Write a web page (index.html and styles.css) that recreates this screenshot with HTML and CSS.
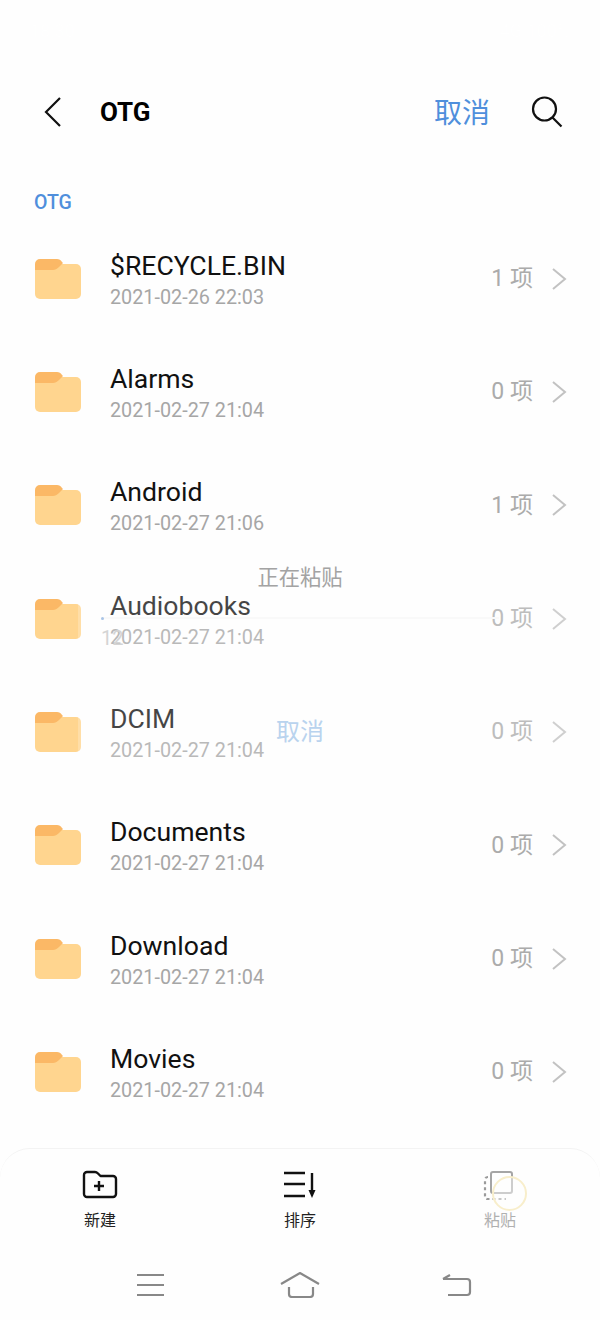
FILE: index.html
```html
<!DOCTYPE html>
<html lang="zh">
<head>
<meta charset="utf-8">
<title>OTG</title>
<link rel="stylesheet" href="styles.css">
</head>
<body>
<div class="page">
  <header class="status"><span>18:30</span><span>4G 100%</span></header>
  <div class="appbar">
    <svg class="back" width="20" height="32" viewBox="0 0 20 32"><path d="M17 2 3 16l14 14" /></svg>
    <h1 class="title">OTG</h1>
    <span class="cancel">取消</span>
    <svg class="search" width="32" height="32" viewBox="0 0 32 32"><circle cx="13.500" cy="13" r="11.500"/><path d="m21.500 21.500 9 9"/></svg>
  </div>
  <div class="section">OTG</div>
  <ul class="list">
    <li class="row">
      <svg class="folder" width="46" height="40" viewBox="0 0 46 40"><rect y="5" width="46" height="35" rx="5" fill="#ffd58f"/><path d="M0 12V5a5 5 0 0 1 5-5h17c2 0 4 1 5 3l1 1-4 4c-2 2-4 3-6 3H0z" fill="#fbb866"/></svg>
      <div class="info"><div class="name">$RECYCLE.BIN</div><div class="date">2021-02-26 22:03</div></div>
      <span class="count">1 项</span>
      <svg class="chev" width="16" height="24" viewBox="0 0 16 24"><path d="m2 2 12 10L2 22"/></svg>
    </li>
    <li class="row">
      <svg class="folder" width="46" height="40" viewBox="0 0 46 40"><rect y="5" width="46" height="35" rx="5" fill="#ffd58f"/><path d="M0 12V5a5 5 0 0 1 5-5h17c2 0 4 1 5 3l1 1-4 4c-2 2-4 3-6 3H0z" fill="#fbb866"/></svg>
      <div class="info"><div class="name">Alarms</div><div class="date">2021-02-27 21:04</div></div>
      <span class="count">0 项</span>
      <svg class="chev" width="16" height="24" viewBox="0 0 16 24"><path d="m2 2 12 10L2 22"/></svg>
    </li>
    <li class="row">
      <svg class="folder" width="46" height="40" viewBox="0 0 46 40"><rect y="5" width="46" height="35" rx="5" fill="#ffd58f"/><path d="M0 12V5a5 5 0 0 1 5-5h17c2 0 4 1 5 3l1 1-4 4c-2 2-4 3-6 3H0z" fill="#fbb866"/></svg>
      <div class="info"><div class="name">Android</div><div class="date">2021-02-27 21:06</div></div>
      <span class="count">1 项</span>
      <svg class="chev" width="16" height="24" viewBox="0 0 16 24"><path d="m2 2 12 10L2 22"/></svg>
    </li>
    <li class="row">
      <svg class="folder" width="46" height="40" viewBox="0 0 46 40"><rect y="5" width="46" height="35" rx="5" fill="#ffd58f"/><path d="M0 12V5a5 5 0 0 1 5-5h17c2 0 4 1 5 3l1 1-4 4c-2 2-4 3-6 3H0z" fill="#fbb866"/></svg>
      <div class="info"><div class="name">Audiobooks</div><div class="date">2021-02-27 21:04</div></div>
      <span class="count">0 项</span>
      <svg class="chev" width="16" height="24" viewBox="0 0 16 24"><path d="m2 2 12 10L2 22"/></svg>
    </li>
    <li class="row">
      <svg class="folder" width="46" height="40" viewBox="0 0 46 40"><rect y="5" width="46" height="35" rx="5" fill="#ffd58f"/><path d="M0 12V5a5 5 0 0 1 5-5h17c2 0 4 1 5 3l1 1-4 4c-2 2-4 3-6 3H0z" fill="#fbb866"/></svg>
      <div class="info"><div class="name">DCIM</div><div class="date">2021-02-27 21:04</div></div>
      <span class="count">0 项</span>
      <svg class="chev" width="16" height="24" viewBox="0 0 16 24"><path d="m2 2 12 10L2 22"/></svg>
    </li>
    <li class="row">
      <svg class="folder" width="46" height="40" viewBox="0 0 46 40"><rect y="5" width="46" height="35" rx="5" fill="#ffd58f"/><path d="M0 12V5a5 5 0 0 1 5-5h17c2 0 4 1 5 3l1 1-4 4c-2 2-4 3-6 3H0z" fill="#fbb866"/></svg>
      <div class="info"><div class="name">Documents</div><div class="date">2021-02-27 21:04</div></div>
      <span class="count">0 项</span>
      <svg class="chev" width="16" height="24" viewBox="0 0 16 24"><path d="m2 2 12 10L2 22"/></svg>
    </li>
    <li class="row">
      <svg class="folder" width="46" height="40" viewBox="0 0 46 40"><rect y="5" width="46" height="35" rx="5" fill="#ffd58f"/><path d="M0 12V5a5 5 0 0 1 5-5h17c2 0 4 1 5 3l1 1-4 4c-2 2-4 3-6 3H0z" fill="#fbb866"/></svg>
      <div class="info"><div class="name">Download</div><div class="date">2021-02-27 21:04</div></div>
      <span class="count">0 项</span>
      <svg class="chev" width="16" height="24" viewBox="0 0 16 24"><path d="m2 2 12 10L2 22"/></svg>
    </li>
    <li class="row">
      <svg class="folder" width="46" height="40" viewBox="0 0 46 40"><rect y="5" width="46" height="35" rx="5" fill="#ffd58f"/><path d="M0 12V5a5 5 0 0 1 5-5h17c2 0 4 1 5 3l1 1-4 4c-2 2-4 3-6 3H0z" fill="#fbb866"/></svg>
      <div class="info"><div class="name">Movies</div><div class="date">2021-02-27 21:04</div></div>
      <span class="count">0 项</span>
      <svg class="chev" width="16" height="24" viewBox="0 0 16 24"><path d="m2 2 12 10L2 22"/></svg>
    </li>
  </ul>
  <div class="toolbar">
    <div class="tool">
      <svg width="36" height="30" viewBox="0 0 36 30"><path class="ink" d="M2 5a3 3 0 0 1 3-3h8c1 0 2 .5 3 1.500L18.500 6H31a3 3 0 0 1 3 3v15a3 3 0 0 1-3 3H5a3 3 0 0 1-3-3z"/><path class="ink" d="M12 16h10M17 11v10"/></svg>
      <span>新建</span>
    </div>
    <div class="tool">
      <svg width="36" height="30" viewBox="0 0 36 30"><path class="ink" d="M2 3h21M2 14h21M2 26h21"/><path class="ink" d="M30 3v20"/><path d="m26.500 20 3.500 8 3.500-8z" fill="#111"/></svg>
      <span>排序</span>
    </div>
    <div class="tool tool-off">
      <svg width="36" height="30" viewBox="0 0 36 30"><rect class="solid" x="9" y="2" width="21" height="21" rx="2"/><path class="dots" d="M6 7c-2 0-3 1-3 3v16c0 2 1 3 3 3h18"/></svg>
      <span>粘贴</span>
    </div>
  </div>
  <nav class="navbar">
    <svg class="nav-menu" width="30" height="24" viewBox="0 0 30 24"><path class="nav" d="M1 2h27M1 12h27M1 22h27"/></svg>
    <svg class="nav-home" width="40" height="26" viewBox="0 0 40 26"><path class="nav" d="M1 12 20 1l19 11M9 15v7a3 3 0 0 0 3 3h18a3 3 0 0 0 3-3v-7"/></svg>
    <svg class="nav-back" width="30" height="24" viewBox="0 0 30 24"><path class="nav" d="M1 6h24a3 3 0 0 1 3 3v10a3 3 0 0 1-3 3H6M1 6l7-4"/></svg>
  </nav>
  <div class="dialog">
    <div class="dialog-title">正在粘贴</div>
    <div class="progress"><i class="progress-dot"></i></div>
    <div class="progress-num">12</div>
    <div class="dialog-cancel">取消</div>
  </div>
  <div class="touch"></div>
</div>
</body>
</html>
```
FILE: styles.css
```css
* { box-sizing: border-box; }
html, body { margin: 0; padding: 0; }
body { background: #fefefe; font-family: Roboto, "Noto Sans CJK SC", sans-serif; }
.page { position: relative; width: 600px; height: 1320px; overflow: hidden; display: flex; flex-direction: column; background: #fefefe; }

.status { height: 62px; padding: 20px 30px 0; display: flex; justify-content: space-between; color: #fff; font-size: 18px; }

.appbar { height: 100px; display: flex; align-items: center; padding: 0 37px 0 43px; }
.back { fill: none; stroke: #111; stroke-width: 2.200; margin-right: 37px; }
.title { margin: 0; flex: 1; font-size: 26px; font-weight: 700; color: #000; }
.cancel { font-size: 28px; line-height: 40px; margin-top: 3px; color: #4f8fdc; margin-right: 41px; }
.search { fill: none; stroke: #111; stroke-width: 2.200; }

.section { height: 60px; padding: 29px 0 0 34px; font-size: 19.500px; font-weight: 500; line-height: 24px; color: #4f8fdc; }

.list { list-style: none; margin: 0; padding: 0; }
.row { height: 113.330px; display: flex; align-items: center; padding: 0 33px 0 35px; }
.folder { flex: none; }
.info { flex: 1; margin-left: 29px; margin-top: 5px; }
.name { font-size: 26.600px; line-height: 32px; margin-bottom: 1px; color: #111; }
.date { font-size: 19.800px; line-height: 30px; color: #a6a6a6; }
.count { font-size: 23px; line-height: 30px; color: #ababab; margin-right: 18px; margin-top: 1px; }
.chev { fill: none; stroke: #c2c2c2; stroke-width: 2; }

.toolbar { position: absolute; left: 0; right: 0; top: 1148px; height: 100px; display: grid; grid-template-columns: repeat(3, 200px); border-top: 1px solid #f3f3f3; border-radius: 30px 30px 0 0; padding-top: 21px; }
.tool { display: flex; flex-direction: column; align-items: center; gap: 9px; font-size: 16px; line-height: 24px; color: #222; }
.tool-off { color: #b0b0b0; }
.ink { fill: none; stroke: #111; stroke-width: 2.400; stroke-linejoin: round; }
.solid { fill: none; stroke: #a5a5a5; stroke-width: 2; }
.dots { fill: none; stroke: #9a9a9a; stroke-width: 2.200; stroke-dasharray: 3 3; }

.navbar { position: absolute; left: 136px; top: 1272px; display: flex; align-items: center; }
.nav-home { margin-left: 114px; }
.nav-back { margin-left: 122px; }
.nav { fill: none; stroke: #888; stroke-width: 2.200; }

.dialog { position: absolute; left: 78px; top: 556px; width: 522px; height: 215px; padding-right: 78px; background: rgba(255,255,255,.22); display: flex; flex-direction: column; align-items: center; }
.dialog-title { margin-top: 7px; font-size: 21.300px; line-height: 30px; color: #a3a3a3; }
.progress { position: relative; margin-top: 24px; width: 398px; height: 2px; background: #f9f9f9; }
.progress-dot { position: absolute; left: 0; top: 0; width: 3px; height: 3px; border-radius: 50%; background: #a9c4e6; }
.progress-num { align-self: flex-start; margin-left: 23px; margin-top: 8px; font-size: 20px; line-height: 22px; color: #d4d4d4; }
.dialog-cancel { margin-top: 68px; font-size: 24px; line-height: 30px; color: #b9d3ee; }

.touch { position: absolute; left: 492px; top: 1176px; width: 35px; height: 35px; border-radius: 50%; border: 2px solid #f8eecb; background: rgba(255,255,255,.45); }
```
